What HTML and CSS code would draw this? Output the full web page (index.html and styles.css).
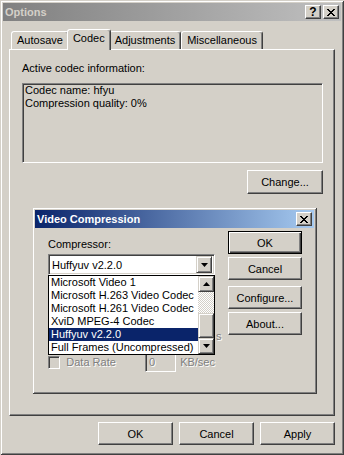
FILE: index.html
```html
<!DOCTYPE html>
<html lang="en">

<head>
  <meta charset="UTF-8">
  <title>Options</title>
  <link rel="stylesheet" href="styles.css">
</head>

<body>
  <div class="window">
    <div class="titlebar inactive">
      <span class="title">Options</span>
      <div class="caption-btns">
        <button class="cap-btn help">?</button>
        <button class="cap-btn">
          <svg width="8" height="7" viewBox="0 0 8 7"><path d="M0 0h2v1H0zM6 0h2v1H6zM1 1h2v1H1zM5 1h2v1H5zM2 2h4v1H2zM3 3h2v1H3zM2 4h4v1H2zM1 5h2v1H1zM5 5h2v1H5zM0 6h2v1H0zM6 6h2v1H6z" fill="#000"/></svg>
        </button>
      </div>
    </div>

    <div class="client">
      <div class="tabs">
        <div class="tab">Autosave</div>
        <div class="tab active">Codec</div>
        <div class="tab">Adjustments</div>
        <div class="tab">Miscellaneous</div>
      </div>
      <div class="panel">
        <div class="label">Active codec information:</div>
        <div class="info">Codec name: hfyu<br>Compression quality: 0%</div>
        <div class="row-right">
          <button class="btn change">Change...</button>
        </div>
      </div>
      <div class="footer">
        <button class="btn">OK</button>
        <button class="btn">Cancel</button>
        <button class="btn">Apply</button>
      </div>
    </div>

    <!-- popup dialog on top of the options window -->
    <div class="dialog">
      <div class="titlebar active">
        <span class="title">Video Compression</span>
        <div class="caption-btns">
          <button class="cap-btn">
            <svg width="8" height="7" viewBox="0 0 8 7"><path d="M0 0h2v1H0zM6 0h2v1H6zM1 1h2v1H1zM5 1h2v1H5zM2 2h4v1H2zM3 3h2v1H3zM2 4h4v1H2zM1 5h2v1H1zM5 5h2v1H5zM0 6h2v1H0zM6 6h2v1H6z" fill="#000"/></svg>
          </button>
        </div>
      </div>
      <div class="dlg-body">
        <div class="dlg-left">
          <div class="dlg-label">Compressor:</div>
          <div class="combo-wrap">
            <div class="combo">
              <span class="combo-text">Huffyuv v2.2.0</span>
              <span class="arrow-btn"><svg width="7" height="4" viewBox="0 0 7 4"><path d="M0 0h7L3.5 4z" fill="#000"/></svg></span>
            </div>
            <div class="dropdown">
              <ul class="items">
                <li>Microsoft Video 1</li>
                <li>Microsoft H.263 Video Codec</li>
                <li>Microsoft H.261 Video Codec</li>
                <li>XviD MPEG-4 Codec</li>
                <li class="selected">Huffyuv v2.2.0</li>
                <li>Full Frames (Uncompressed)</li>
              </ul>
              <div class="scrollbar">
                <span class="arrow-btn sb"><svg width="7" height="4" viewBox="0 0 7 4"><path d="M3.5 0L7 4H0z" fill="#000"/></svg></span>
                <span class="track"></span>
                <span class="thumb"></span>
                <span class="arrow-btn sb"><svg width="7" height="4" viewBox="0 0 7 4"><path d="M0 0h7L3.5 4z" fill="#000"/></svg></span>
              </div>
            </div>
          </div>
          <!-- row hidden by the open list, only its last letter shows -->
          <div class="opt-row first">
            <span class="tail">s</span>
          </div>
          <div class="opt-row">
            <span class="check"></span>
            <span class="opt-label">Data Rate</span>
            <span class="edit">0</span>
            <span class="unit">KB/sec</span>
          </div>
        </div>
        <div class="dlg-right">
          <button class="btn default">OK</button>
          <button class="btn">Cancel</button>
          <button class="btn gap">Configure...</button>
          <button class="btn">About...</button>
        </div>
      </div>
    </div>
  </div>
</body>

</html>
```

FILE: styles.css
```css
body {
  margin: 0;
  background: #d4d0c8;
  font-family: "Liberation Sans", Arial, sans-serif;
  font-size: 11px;
  color: #000;
}

button {
  font: inherit;
  color: #000;
}

.window {
  position: relative;
  width: 344px;
  height: 455px;
  box-sizing: border-box;
  padding: 3px;
  background: #d4d0c8;
  box-shadow: inset 1px 1px #d4d0c8, inset -1px -1px #404040,
    inset 2px 2px #fff, inset -2px -2px #808080;
}

/* title bars */
.titlebar {
  height: 18px;
  display: flex;
  align-items: center;
  justify-content: space-between;
  padding: 0 2px;
}

.titlebar.inactive {
  background: linear-gradient(90deg, #808080, #c0c0c0);
  color: #d4d0c8;
}

.titlebar.active {
  background: linear-gradient(90deg, #0a246a, #a6caf0);
  color: #fff;
}

.title {
  font-weight: bold;
}

.caption-btns {
  display: flex;
  gap: 2px;
}

.cap-btn {
  width: 16px;
  height: 14px;
  padding: 0;
  display: flex;
  align-items: center;
  justify-content: center;
  background: #d4d0c8;
  border: 1px solid;
  border-color: #fff #404040 #404040 #fff;
  box-shadow: inset -1px -1px #808080;
}

.cap-btn.help {
  font-weight: bold;
  font-size: 12px;
  line-height: 12px;
}

/* tabs */
.client {
  padding: 8px 6px 0;
}

.tabs {
  display: flex;
  align-items: flex-end;
  height: 20px;
  padding-left: 2px;
}

.tab {
  height: 18px;
  box-sizing: border-box;
  padding: 0 5px;
  line-height: 16px;
  border: 1px solid;
  border-bottom: none;
  border-color: #fff #404040 transparent #fff;
  box-shadow: inset -1px 0 #808080;
  border-radius: 3px 3px 0 0;
  background: #d4d0c8;
}

.tab.active {
  position: relative;
  z-index: 1;
  height: 21px;
  margin: 0 -2px -1px;
}

.panel {
  height: 367px;
  box-sizing: border-box;
  padding: 11px 11px 0 12px;
  border: 1px solid;
  border-color: #fff #404040 #404040 #fff;
  box-shadow: inset -1px -1px #808080;
}

.label {
  line-height: 14px;
}

.info {
  height: 80px;
  box-sizing: border-box;
  margin-top: 8px;
  padding: 0 2px;
  line-height: 13px;
  border: 1px solid;
  border-color: #808080 #fff #fff #808080;
  box-shadow: inset 1px 1px #404040, inset -1px -1px #d4d0c8;
}

.row-right {
  display: flex;
  justify-content: flex-end;
  margin-top: 7px;
}

.btn {
  width: 75px;
  height: 23px;
  padding: 0;
  background: #d4d0c8;
  border: 1px solid;
  border-color: #fff #404040 #404040 #fff;
  box-shadow: inset -1px -1px #808080;
}

.btn.change {
  width: 76px;
  height: 24px;
}

.btn.default {
  border-color: #000;
  box-shadow: inset 1px 1px #fff, inset -1px -1px #404040, inset -2px -2px #808080;
}

.footer {
  display: flex;
  justify-content: flex-end;
  gap: 6px;
  margin-top: 6px;
}

/* video compression dialog */
.dialog {
  position: absolute;
  left: 32px;
  top: 207px;
  width: 285px;
  height: 187px;
  box-sizing: border-box;
  padding: 3px;
  background: #d4d0c8;
  box-shadow: inset 1px 1px #d4d0c8, inset -1px -1px #404040,
    inset 2px 2px #fff, inset -2px -2px #808080;
}

.dlg-body {
  display: flex;
  gap: 13px;
  padding: 3px 0 0 13px;
}

.dlg-left {
  width: 167px;
}

.dlg-label {
  margin-top: 7px;
  line-height: 13px;
}

.combo-wrap {
  position: relative;
  margin-top: 3px;
}

.combo {
  height: 21px;
  box-sizing: border-box;
  display: flex;
  align-items: center;
  justify-content: space-between;
  padding: 0 2px 0 3px;
  background: #fff;
  border: 1px solid;
  border-color: #808080 #fff #fff #808080;
  box-shadow: inset 1px 1px #404040, inset -1px -1px #d4d0c8;
}

.arrow-btn {
  width: 16px;
  height: 17px;
  box-sizing: border-box;
  display: flex;
  align-items: center;
  justify-content: center;
  background: #d4d0c8;
  border: 1px solid;
  border-color: #d4d0c8 #404040 #404040 #d4d0c8;
  box-shadow: inset 1px 1px #fff, inset -1px -1px #808080;
}

.dropdown {
  position: absolute;
  top: 21px;
  left: 0;
  width: 167px;
  height: 80px;
  box-sizing: border-box;
  display: flex;
  background: #fff;
  border: 1px solid #000;
  z-index: 2;
}

.items {
  flex: 1;
  list-style: none;
  margin: 0;
  padding: 0;
}

.items li {
  height: 13px;
  line-height: 13px;
  padding-left: 2px;
  white-space: nowrap;
  overflow: hidden;
}

.items li.selected {
  background: #0a246a;
  color: #fff;
}

.scrollbar {
  width: 16px;
  display: flex;
  flex-direction: column;
}

.arrow-btn.sb {
  height: 16px;
}

.track {
  height: 21px;
  background: repeating-conic-gradient(#fff 0 25%, #d4d0c8 0 50%) 0 0 / 2px 2px;
}

.thumb {
  height: 25px;
  box-sizing: border-box;
  background: #d4d0c8;
  border: 1px solid;
  border-color: #d4d0c8 #404040 #404040 #d4d0c8;
  box-shadow: inset 1px 1px #fff, inset -1px -1px #808080;
}

.opt-row {
  display: flex;
  align-items: center;
  height: 20px;
  margin-top: 6px;
  color: #808080;
  text-shadow: 1px 1px #fff;
}

.opt-row.first {
  margin-top: 51px;
}

.tail {
  margin-left: 168px;
}

.check {
  width: 13px;
  height: 13px;
  box-sizing: border-box;
  margin-right: 6px;
  border: 1px solid;
  border-color: #808080 #fff #fff #808080;
  box-shadow: inset 1px 1px #404040, inset -1px -1px #d4d0c8;
}

.opt-label {
  width: 84px;
}

.edit {
  width: 33px;
  height: 20px;
  box-sizing: border-box;
  padding: 3px 0 0 3px;
  margin-right: 4px;
  border: 1px solid;
  border-color: #808080 #fff #fff #808080;
  box-shadow: inset 1px 1px #404040, inset -1px -1px #d4d0c8;
}

.dlg-right {
  display: flex;
  flex-direction: column;
  gap: 3px;
}

.dlg-right .btn {
  width: 74px;
}

.dlg-right .btn.gap {
  margin-top: 3px;
}
```
